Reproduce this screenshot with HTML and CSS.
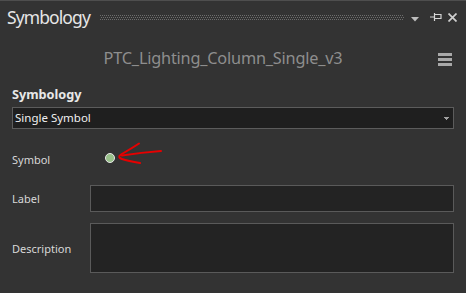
FILE: index.html
```html
<!DOCTYPE html>
<html>
<head>
<meta charset="utf-8">
<link rel="stylesheet" href="styles.css">
</head>
<body>
<div class="pane">
  <div class="titlebar">
    <span class="title">Symbology</span>
    <svg class="grip" height="6" preserveAspectRatio="none">
      <defs>
        <pattern id="dots" width="2" height="4" patternUnits="userSpaceOnUse">
          <rect x="0" y="0" width="1" height="1" fill="#6c6c6c"/>
          <rect x="1" y="2" width="1" height="1" fill="#6c6c6c"/>
        </pattern>
      </defs>
      <rect x="0" y="0" width="100%" height="5" fill="url(#dots)"/>
    </svg>
    <span class="tbtns">
      <svg class="b-drop" width="8" height="5" viewBox="0 0 8 5"><path d="M0 0h8l-4 4.5z" fill="#bdbdbd"/></svg>
      <svg class="b-pin" width="12" height="8" viewBox="0 0 12 8"><path d="M0 4h4M4.5 0v8M4.5 1.5h6.5v4h-6.5" stroke="#d6d6d6" stroke-width="1.2" fill="none"/></svg>
      <svg class="b-close" width="9" height="9" viewBox="0 0 9 9"><path d="M0.5 0.5l8 8M8.5 0.5l-8 8" stroke="#cfcfcf" stroke-width="1.7"/></svg>
    </span>
  </div>
  <div class="layerrow">
    <span class="layername">PTC_Lighting_Column_Single_v3</span>
    <svg class="menu" width="14" height="13" viewBox="0 0 14 13"><rect x="0" y="0" width="14" height="3" fill="#a9a9a9"/><rect x="0" y="5" width="14" height="3" fill="#a9a9a9"/><rect x="0" y="10" width="14" height="3" fill="#a9a9a9"/></svg>
  </div>
  <div class="section">
    <div class="sectitle">Symbology</div>
    <div class="select">
      <span>Single Symbol</span>
      <svg width="5" height="3" viewBox="0 0 5 3"><path d="M0 0h5v1H4v1H3v1H2V2H1V1H0z" fill="#a0a0a0"/></svg>
    </div>
    <div class="row symrow">
      <span class="lbl">Symbol</span>
      <span class="symcell">
        <span class="dot"></span>
        <svg class="arrow" width="50" height="26" viewBox="0 0 50 26"><path d="M24 2.5C18 6.5 12 10 6 13.5C3 15.5 4 17 7 18C13 20 19 21 25 22" stroke="#e60000" stroke-width="2" fill="none" stroke-linecap="round" stroke-linejoin="round"/><path d="M7 14.5C20 12.5 33 11 46 10" stroke="#e60000" stroke-width="2" fill="none" stroke-linecap="round"/></svg>
      </span>
    </div>
    <div class="row labelrow">
      <span class="lbl">Label</span>
      <div class="input"></div>
    </div>
    <div class="row descrow">
      <span class="lbl">Description</span>
      <div class="input tall"></div>
    </div>
  </div>
</div>
</body>
</html>
```

FILE: styles.css
```css
html, body {
  margin: 0;
  padding: 0;
  background: #333333;
}
body {
  width: 466px;
  height: 293px;
  overflow: hidden;
  font-family: "Noto Sans", "Open Sans", sans-serif;
}
.pane {
  border-top: 1px solid #4e4e4e;
}
.titlebar {
  height: 32px;
  display: flex;
  align-items: center;
  padding: 0 9px 0 7px;
}
.title {
  color: #e6e6e6;
  font-size: 17.5px;
  letter-spacing: -0.9px;
  margin-top: -1px;
}
.grip {
  flex: 1;
  height: 5px;
  margin: 0 7px 0 10px;
}
.tbtns {
  display: flex;
  align-items: center;
}
.b-drop {
  margin-top: 4px;
  margin-right: 11px;
}
.b-pin {
  margin-right: 6px;
}
.layerrow {
  height: 48px;
  display: flex;
  align-items: center;
  justify-content: center;
  position: relative;
}
.layername {
  color: #8e8e8e;
  font-size: 16.3px;
  letter-spacing: -0.2px;
  margin-top: 2px;
  margin-right: 20px;
}
.menu {
  position: absolute;
  right: 14px;
  top: 20px;
}
.section {
  padding: 0 12px;
}
.sectitle {
  color: #e8e8e8;
  font-weight: bold;
  font-size: 12.7px;
  height: 17px;
  line-height: 17px;
  margin-top: 5px;
  margin-bottom: 4px;
}
.select {
  height: 20px;
  border: 1px solid #5c5c5c;
  background: #1f1f1f;
  display: flex;
  align-items: center;
  justify-content: space-between;
  padding: 0 4px 0 2px;
  color: #f0f0f0;
  font-size: 11.5px;
}
.select span {
  margin-top: -2px;
}
.row {
  display: flex;
  align-items: center;
}
.symrow {
  height: 24px;
  margin-top: 18px;
}
.labelrow {
  margin-top: 14px;
}
.descrow {
  margin-top: 11px;
}
.lbl {
  width: 78px;
  color: #d8d8d8;
  font-size: 11px;
  flex: none;
}
.symcell {
  position: relative;
  display: flex;
  align-items: center;
  padding-left: 15px;
}
.dot {
  width: 8px;
  height: 8px;
  border-radius: 50%;
  background: #98c08a;
  border: 1px solid #e8e8e8;
  margin-top: -2px;
}
.arrow {
  position: absolute;
  left: 25px;
  top: -14px;
}
.input {
  flex: 1;
  height: 25px;
  border: 1px solid #5a5a5a;
  background: #232323;
}
.input.tall {
  height: 48px;
}
```
